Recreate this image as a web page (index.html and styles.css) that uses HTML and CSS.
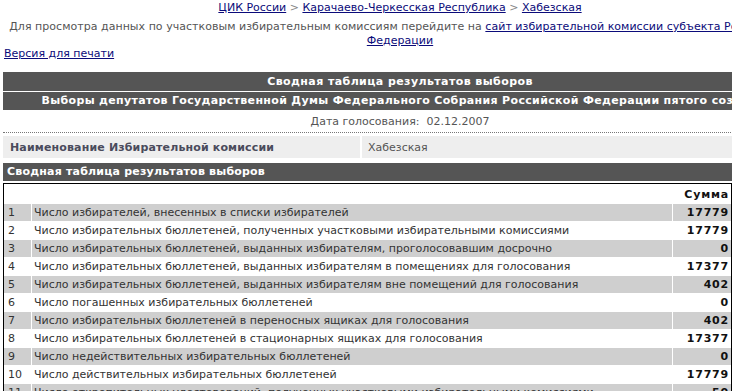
FILE: index.html
```html
<!DOCTYPE html>
<html lang="ru">
<head>
<meta charset="utf-8">
<title>Сводная таблица результатов выборов</title>
<link rel="stylesheet" href="styles.css">
</head>
<body>
<div class="page">
  <div class="crumbs"><a href="#">ЦИК России</a> <span class="sep">&gt;</span> <a href="#">Карачаево-Черкесская Республика</a> <span class="sep">&gt;</span> <a href="#">Хабезская</a></div>
  <div class="note">Для просмотра данных по участковым избирательным комиссиям перейдите на <a href="#">сайт избирательной комиссии субъекта Российской Федерации</a></div>
  <div class="print"><a href="#">Версия для печати</a></div>

  <div class="band band-center band-first">Сводная таблица результатов выборов</div>
  <div class="band band-center band-second">Выборы депутатов Государственной Думы Федерального Собрания Российской Федерации пятого созыва</div>
  <div class="date">Дата голосования:&nbsp; 02.12.2007</div>
  <div class="commission">
    <div class="commission-label">Наименование Избирательной комиссии</div>
    <div class="commission-value">Хабезская</div>
  </div>
  <div class="band band-left">Сводная таблица результатов выборов</div>

  <table class="results">
    <colgroup><col class="c-num"><col class="c-name"><col class="c-sum"></colgroup>
    <tr class="head-row"><td></td><td></td><td class="sum">Сумма</td></tr>
    <tr class="odd"><td class="num">1</td><td class="name">Число избирателей, внесенных в списки избирателей</td><td class="sum">17779</td></tr>
    <tr><td class="num">2</td><td class="name">Число избирательных бюллетеней, полученных участковыми избирательными комиссиями</td><td class="sum">17779</td></tr>
    <tr class="odd"><td class="num">3</td><td class="name">Число избирательных бюллетеней, выданных избирателям, проголосовавшим досрочно</td><td class="sum">0</td></tr>
    <tr><td class="num">4</td><td class="name">Число избирательных бюллетеней, выданных избирателям в помещениях для голосования</td><td class="sum">17377</td></tr>
    <tr class="odd"><td class="num">5</td><td class="name">Число избирательных бюллетеней, выданных избирателям вне помещений для голосования</td><td class="sum">402</td></tr>
    <tr><td class="num">6</td><td class="name">Число погашенных избирательных бюллетеней</td><td class="sum">0</td></tr>
    <tr class="odd"><td class="num">7</td><td class="name">Число избирательных бюллетеней в переносных ящиках для голосования</td><td class="sum">402</td></tr>
    <tr><td class="num">8</td><td class="name">Число избирательных бюллетеней в стационарных ящиках для голосования</td><td class="sum">17377</td></tr>
    <tr class="odd"><td class="num">9</td><td class="name">Число недействительных избирательных бюллетеней</td><td class="sum">0</td></tr>
    <tr><td class="num">10</td><td class="name">Число действительных избирательных бюллетеней</td><td class="sum">17779</td></tr>
    <tr class="odd"><td class="num">11</td><td class="name">Число открепительных удостоверений, полученных участковыми избирательными комиссиями</td><td class="sum">50</td></tr>
    <tr><td class="num">12</td><td class="name">Число открепительных удостоверений, выданных избирателям на избирательных участках</td><td class="sum">48</td></tr>
  </table>
</div>
</body>
</html>
```

FILE: styles.css
```css
html, body {
  margin: 0;
  padding: 0;
  background: #fff;
  overflow: hidden;
}

body {
  font-family: "DejaVu Sans", Verdana, sans-serif;
  font-size: 11px;
  line-height: 14px;
  color: #555;
}

a {
  color: #0b0b7a;
  text-decoration: underline;
}

.page {
  width: 794px;
  padding-left: 3px;
  padding-top: 1px;
}

.crumbs {
  text-align: center;
  height: 14px;
}

.crumbs .sep {
  color: #888;
}

.note {
  margin-top: 5px;
  text-align: center;
  padding: 0 2px;
  letter-spacing: 0.03px;
  line-height: 14px;
}

.print {
  padding-left: 1px;
  margin-top: -1px;
}

.band {
  background: #555;
  color: #fff;
  font-weight: bold;
  height: 18px;
  line-height: 18px;
  white-space: nowrap;
}

.band-center {
  text-align: center;
  letter-spacing: 0.33px;
}

.band-first {
  margin-top: 11px;
  height: 19px;
  line-height: 19px;
  letter-spacing: 0.42px;
}

.band-second {
  margin-top: 1px;
}

.band-left {
  margin-top: 5px;
  padding-left: 4px;
  letter-spacing: 0.2px;
}

.date {
  height: 21px;
  line-height: 22px;
  padding-top: 1px;
  text-align: center;
  border-bottom: 1px dotted #777;
}

.commission {
  display: flex;
  margin-top: 3px;
  height: 22px;
  line-height: 24px;
}

.commission-label {
  width: 350px;
  padding-left: 7px;
  background: #eeeeee;
  color: #4a4b5c;
  font-weight: bold;
  letter-spacing: 0.15px;
}

.commission-value {
  flex: 1;
  margin-left: 2px;
  padding-left: 6px;
  background: #eeeeee;
  color: #555;
}

.results {
  margin-top: 2px;
  width: 729px;
  table-layout: fixed;
  border-collapse: separate;
  border-spacing: 0;
  border: 1px solid #000;
  border-bottom: none;
  color: #333;
}

.c-num { width: 27px; }
.c-name { width: 641px; }
.c-sum { width: 59px; }

.results td {
  padding: 0;
  height: 17px;
  line-height: 17px;
  border-bottom: 1px solid #fff;
  white-space: nowrap;
  overflow: hidden;
}

.results td + td {
  border-left: 1px solid #fff;
}

.results .head-row td {
  line-height: 14px;
  vertical-align: bottom;
  padding-bottom: 1px;
  height: 18px;
}

.results .odd td {
  background: #cfcfcf;
}

.results .num {
  padding-left: 4px;
}

.results .name {
  padding-left: 2px;
}

.results .sum {
  text-align: right;
  padding-right: 2px;
  font-weight: bold;
  color: #111;
  letter-spacing: 0.8px;
}
```
